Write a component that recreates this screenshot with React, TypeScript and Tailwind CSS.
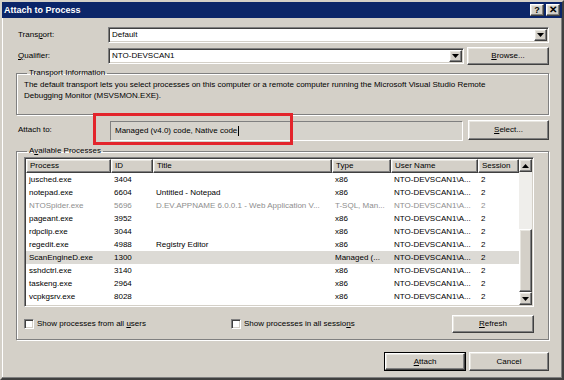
import React from 'react';

const raised =
  'border border-t-white border-l-white border-r-[#404040] border-b-[#404040] shadow-[inset_-1px_-1px_0_#808080,inset_1px_1px_0_#e8e6e0]';
const sunken =
  'border border-t-[#808080] border-l-[#808080] border-b-white border-r-white shadow-[inset_1px_1px_0_#404040,inset_-1px_-1px_0_#d4d0c8]';
const etched = 'border border-[#808080] shadow-[1px_1px_0_white,inset_1px_1px_0_white]';

const cols = ['w-[85px]', 'w-[42px]', 'w-[179px]', 'w-[59px]', 'w-[87px]', 'w-[41px]'];
const headers = ['Process', 'ID', 'Title', 'Type', 'User Name', 'Session'];

const rows = [
  ['jusched.exe', '3404', '', 'x86'],
  ['notepad.exe', '6604', 'Untitled - Notepad', 'x86'],
  ['NTOSpider.exe', '5696', 'D.EV.APPNAME 6.0.0.1 - Web Application V...', 'T-SQL, Man...'],
  ['pageant.exe', '3952', '', 'x86'],
  ['rdpclip.exe', '3044', '', 'x86'],
  ['regedit.exe', '4988', 'Registry Editor', 'x86'],
  ['ScanEngineD.exe', '1300', '', 'Managed (...'],
  ['sshdctrl.exe', '3140', '', 'x86'],
  ['taskeng.exe', '2964', '', 'x86'],
  ['vcpkgsrv.exe', '8028', '', 'x86'],
];

const DownArrow = () => (
  <svg width="7" height="4" viewBox="0 0 7 4">
    <path d="M0 0h7L3.5 4z" fill="#000" />
  </svg>
);

const UpArrow = () => (
  <svg width="7" height="4" viewBox="0 0 7 4">
    <path d="M0 4h7L3.5 0z" fill="#000" />
  </svg>
);

const Combo: React.FC<{ value: string; className: string }> = ({ value, className }) => (
  <div className={`${sunken} ${className} h-[16px] bg-white flex items-center`}>
    <span className="flex-1 pl-[3px] leading-[12px]">{value}</span>
    <div className={`${raised} w-[13px] h-[12px] mr-[1px] bg-[#d4d0c8] flex items-center justify-center`}>
      <DownArrow />
    </div>
  </div>
);

const Button: React.FC<{ children: React.ReactNode; className: string }> = ({ children, className }) => (
  <div className={`${raised} ${className} bg-[#d4d0c8] flex items-center justify-center`}>{children}</div>
);

const Check: React.FC<{ children: React.ReactNode; className?: string }> = ({ children, className }) => (
  <div className={`flex items-center ${className ?? ''}`}>
    <div className={`${sunken} w-[10px] h-[10px] bg-white`}></div>
    <span className="ml-[3px]">{children}</span>
  </div>
);

export default function App() {
  return (
    <div
      className="w-[564px] h-[380px] bg-[#d4d0c8] border-2 border-t-[#d4d0c8] border-l-[#d4d0c8] border-r-[#404040] border-b-[#404040] shadow-[inset_-1px_-1px_0_#808080,inset_1px_1px_0_white] text-[8px] leading-[10px] text-black flex flex-col relative"
      style={{ fontFamily: '"Liberation Sans", Arial, sans-serif' }}
    >
      {/* Title bar */}
      <div className="h-[16px] bg-[#0b2569] flex items-center pl-[2px] pr-[2px]">
        <span className="flex-1 text-white font-bold text-[9px]">Attach to Process</span>
        <Button className="w-[14px] h-[12px] font-bold text-[9px]">?</Button>
        <Button className="w-[14px] h-[12px] ml-[2px] font-bold text-[10px]">✕</Button>
      </div>

      <div className="flex flex-col pl-[14px] pr-[13px]">
        <div className="flex items-center mt-[9px]">
          <span className="w-[92px] pl-[2px]">
            Trans<u>p</u>ort:
          </span>
          <Combo value="Default" className="flex-1" />
        </div>

        <div className="flex items-center mt-[4px] h-[18px]">
          <span className="w-[92px] pl-[2px]">
            <u>Q</u>ualifier:
          </span>
          <Combo value="NTO-DEVSCAN1" className="w-[356px]" />
          <Button className="flex-1 h-[18px] ml-[3px]">
            <span>
              <u>B</u>rowse...
            </span>
          </Button>
        </div>

        <fieldset className={`${etched} mt-[3px] h-[47px] pl-[7px]`}>
          <legend className="ml-[3px] px-[2px]">Transport Information</legend>
          <p className="leading-[11px] mt-[1px]">
            The default transport lets you select processes on this computer or a remote computer running the Microsoft
            Visual Studio Remote
            <br />
            Debugging Monitor (MSVSMON.EXE).
          </p>
        </fieldset>

        <div className="flex items-center mt-[5px] h-[20px]">
          <span className="w-[94px] pl-[2px]">Attach to:</span>
          <div className="w-[352px] h-[19px] border-t border-l border-t-[#808080] border-l-[#808080] shadow-[1px_1px_0_white] flex items-center pl-[4px] bg-[#d6d3cc]">
            <span>Managed (v4.0) code, Native code</span>
            <span className="w-px h-[10px] bg-black ml-px"></span>
          </div>
          <Button className="flex-1 h-[20px] ml-[6px]">
            <span>
              <u>S</u>elect...
            </span>
          </Button>
        </div>

        <fieldset className={`${etched} mt-[6px] h-[194px] pl-[7px] pr-[14px] flex flex-col`}>
          <legend className="ml-[3px] px-[2px]">
            A<u>v</u>ailable Processes
          </legend>
          <div className={`${sunken} mt-[1px] h-[150px] w-[510px] bg-white flex p-px`}>
            <div className="flex-1 flex flex-col overflow-hidden">
              <div className="flex h-[14px]">
                {headers.map((h, i) => (
                  <div key={h} className={`${raised} ${cols[i]} h-[14px] bg-[#d4d0c8] pl-[3px] flex items-center`}>
                    {h}
                  </div>
                ))}
              </div>
              {rows.map((r, ri) => {
                const gray = ri === 2;
                const sel = ri === 6;
                return (
                  <div
                    key={r[0]}
                    className={`flex h-[13px] items-center whitespace-nowrap ${sel ? 'bg-[#dcdad5]' : ''} ${
                      gray ? 'text-[#8e8e8e]' : ''
                    }`}
                  >
                    {[r[0], r[1], r[2], r[3], 'NTO-DEVSCAN1\\A...', '2'].map((c, i) => (
                      <div key={i} className={`${cols[i]} pl-[3px] overflow-hidden`}>
                        {c}
                      </div>
                    ))}
                  </div>
                );
              })}
            </div>
            {/* scrollbar */}
            <div className="w-[13px] flex flex-col">
              <Button className="h-[13px]">
                <UpArrow />
              </Button>
              <div className="h-[57px] bg-[#efeeeb]"></div>
              <div className={`${raised} flex-1 bg-[#d4d0c8]`}></div>
              <Button className="h-[13px]">
                <DownArrow />
              </Button>
            </div>
          </div>

          <div className="flex items-center mt-[8px] h-[18px]">
            <Check className="w-[207px]">
              Show processes from all <u>u</u>sers
            </Check>
            <Check className="flex-1">
              Show processes in all sessio<u>n</u>s
            </Check>
            <Button className="w-[82px] h-[18px]">
              <span>
                <u>R</u>efresh
              </span>
            </Button>
          </div>
        </fieldset>

        <div className="flex justify-end mt-[12px] gap-[3px]">
          <div className="border border-black">
            <Button className="w-[80px] h-[17px]">
              <span>
                <u>A</u>ttach
              </span>
            </Button>
          </div>
          <Button className="w-[80px] h-[19px]">Cancel</Button>
        </div>
      </div>

      {/* annotation */}
      <div className="absolute left-[91px] top-[111px] w-[200px] h-[32px] border-[3px] border-[#e3242b]"></div>
    </div>
  );
}
